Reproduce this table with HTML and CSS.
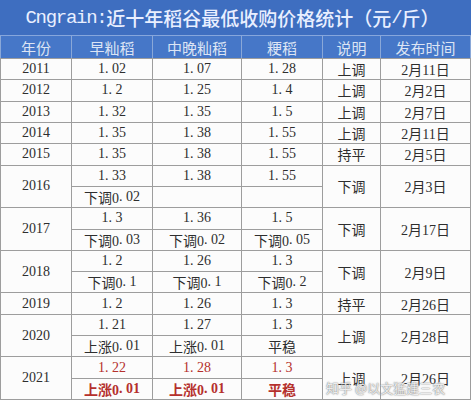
FILE: index.html
```html
<!DOCTYPE html>
<html lang="zh-CN">
<head>
<meta charset="utf-8">
<title>Cngrain 近十年稻谷最低收购价格统计</title>
<link rel="stylesheet" href="styles.css">
</head>
<body>
<div class="sheet">
  <div class="title"><span class="tl">Cngrain:</span>近十年稻谷最低收购价格统计（元<span class="tl">/</span>斤）</div>
  <div class="head">
    <div class="h">年份</div>
    <div class="h">早籼稻</div>
    <div class="h">中晚籼稻</div>
    <div class="h">粳稻</div>
    <div class="h">说明</div>
    <div class="h">发布时间</div>
  </div>
  <div class="grid">
    <div class="c y">2011</div><div class="c m">1<span class="d">.</span>02</div><div class="c m">1<span class="d">.</span>07</div><div class="c m">1<span class="d">.</span>28</div><div class="c">上调</div><div class="c y">2月11日</div>
    <div class="c y">2012</div><div class="c m">1<span class="d">.</span>2</div><div class="c m">1<span class="d">.</span>25</div><div class="c m">1<span class="d">.</span>4</div><div class="c">上调</div><div class="c y">2月2日</div>
    <div class="c y">2013</div><div class="c m">1<span class="d">.</span>32</div><div class="c m">1<span class="d">.</span>35</div><div class="c m">1<span class="d">.</span>5</div><div class="c">上调</div><div class="c y">2月7日</div>
    <div class="c y">2014</div><div class="c m">1<span class="d">.</span>35</div><div class="c m">1<span class="d">.</span>38</div><div class="c m">1<span class="d">.</span>55</div><div class="c">上调</div><div class="c y">2月11日</div>
    <div class="c y">2015</div><div class="c m">1<span class="d">.</span>35</div><div class="c m">1<span class="d">.</span>38</div><div class="c m">1<span class="d">.</span>55</div><div class="c">持平</div><div class="c y">2月5日</div>

    <div class="c y r2">2016</div><div class="c m">1<span class="d">.</span>33</div><div class="c m">1<span class="d">.</span>38</div><div class="c m">1<span class="d">.</span>55</div><div class="c r2">下调</div><div class="c y r2">2月3日</div>
    <div class="c m">下调0<span class="d">.</span>02</div><div class="c m"></div><div class="c m"></div>

    <div class="c y r2">2017</div><div class="c m">1<span class="d">.</span>3</div><div class="c m">1<span class="d">.</span>36</div><div class="c m">1<span class="d">.</span>5</div><div class="c r2">下调</div><div class="c y r2">2月17日</div>
    <div class="c m">下调0<span class="d">.</span>03</div><div class="c m">下调0<span class="d">.</span>02</div><div class="c m">下调0<span class="d">.</span>05</div>

    <div class="c y r2">2018</div><div class="c m">1<span class="d">.</span>2</div><div class="c m">1<span class="d">.</span>26</div><div class="c m">1<span class="d">.</span>3</div><div class="c r2">下调</div><div class="c y r2">2月9日</div>
    <div class="c m">下调0<span class="d">.</span>1</div><div class="c m">下调0<span class="d">.</span>1</div><div class="c m">下调0<span class="d">.</span>2</div>

    <div class="c y">2019</div><div class="c m">1<span class="d">.</span>2</div><div class="c m">1<span class="d">.</span>26</div><div class="c m">1<span class="d">.</span>3</div><div class="c">持平</div><div class="c y">2月26日</div>

    <div class="c y r2">2020</div><div class="c m">1<span class="d">.</span>21</div><div class="c m">1<span class="d">.</span>27</div><div class="c m">1<span class="d">.</span>3</div><div class="c r2">上调</div><div class="c y r2">2月28日</div>
    <div class="c m">上涨0<span class="d">.</span>01</div><div class="c m">上涨0<span class="d">.</span>01</div><div class="c m">平稳</div>

    <div class="c y r2">2021</div><div class="c m red">1<span class="d">.</span>22</div><div class="c m red">1<span class="d">.</span>28</div><div class="c m red">1<span class="d">.</span>3</div><div class="c r2">上调</div><div class="c y r2">2月26日</div>
    <div class="c m red b">上涨0<span class="d">.</span>01</div><div class="c m red b">上涨0<span class="d">.</span>01</div><div class="c m red b">平稳</div>
  </div>
  <div class="wm">知乎 @以文猛建三农</div>
</div>
</body>
</html>
```

FILE: styles.css
```css
html, body {
  margin: 0;
  padding: 0;
  background: #ffffff;
}

.sheet {
  position: relative;
  width: 471px;
  height: 400px;
  overflow: hidden;
  font-family: "Noto Sans CJK SC", sans-serif;
  color: #2e2e2e;
}

.title {
  height: 35px;
  border-bottom: 1px solid #86a6dc;
  background: #3e6ec0;
  color: #e9efff;
  font-size: 19px;
  font-weight: 500;
  display: flex;
  align-items: center;
  justify-content: center;
  white-space: nowrap;
  padding-right: 6px;
}

.tl {
  font-family: "Liberation Mono", monospace;
  letter-spacing: -1.3px;
}

.head {
  display: grid;
  grid-template-columns: 70px 80px 88px 80px 57px 1fr;
  column-gap: 1px;
  padding: 0 1px;
  height: 22px;
  background: #8aa8d8;
}

.h {
  background: #4677c8;
  color: #dce4f4;
  font-size: 15px;
  display: flex;
  align-items: center;
  justify-content: center;
}

.grid {
  display: grid;
  grid-template-columns: 70px 80px 88px 80px 57px 1fr;
  grid-template-rows: repeat(16, 1fr);
  gap: 1px;
  padding: 1px;
  height: 342px;
  box-sizing: border-box;
  background: #9d9d9d;
}

.c {
  background: #fcfcfc;
  font-size: 14px;
  display: flex;
  align-items: center;
  justify-content: center;
  white-space: nowrap;
}

.r2 {
  grid-row: span 2;
}

.y,
.m {
  font-family: "Liberation Serif", "Noto Sans CJK SC", serif;
}

.d {
  display: inline-block;
  width: 7px;
}

.red {
  color: #b5302c;
}

.b {
  font-weight: 700;
}

.wm {
  position: absolute;
  left: 326px;
  top: 378px;
  font-size: 13px;
  color: rgba(255, 255, 255, 0.85);
  text-shadow: 0 0 1px #777, 0 0 2px #999;
  white-space: nowrap;
}
```
